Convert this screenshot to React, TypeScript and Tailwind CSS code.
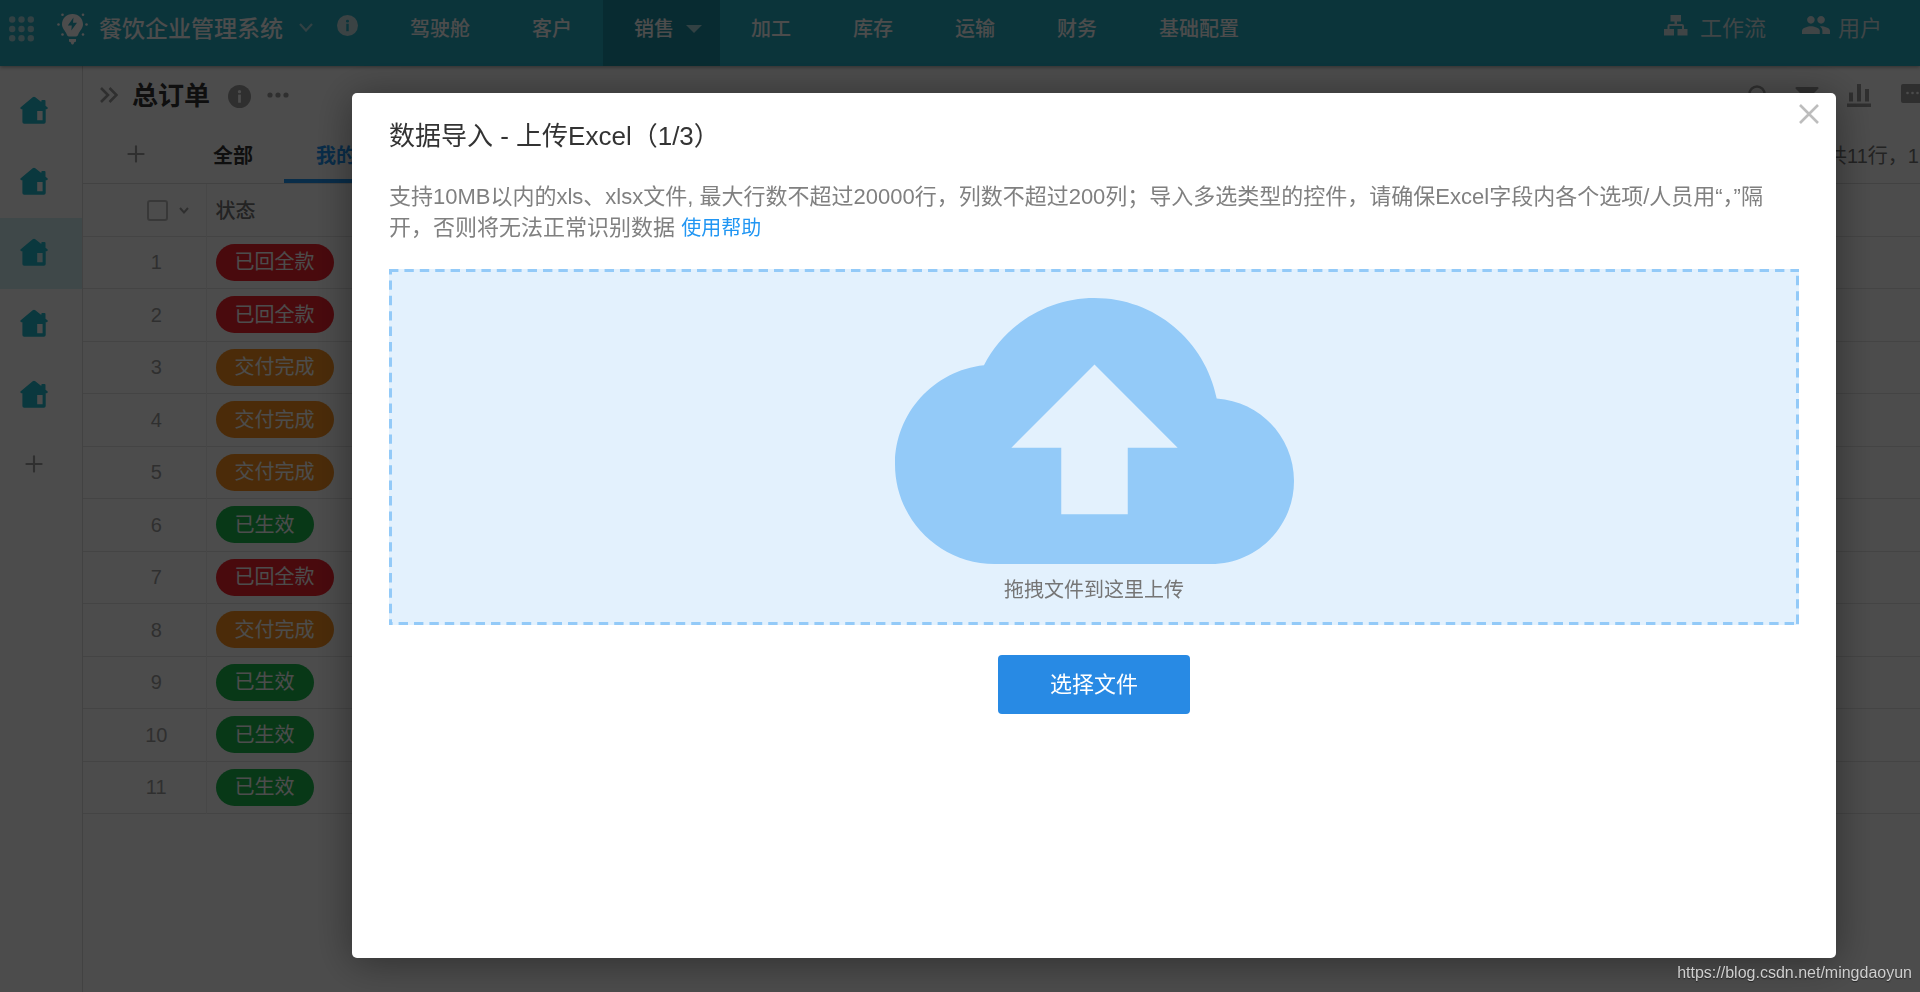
import { FiPlus } from 'react-icons/fi'

const navItems = ['驾驶舱', '客户', '销售', '加工', '库存', '运输', '财务', '基础配置']

const statusStyle = {
    已回全款: 'bg-[#f5222d]',
    交付完成: 'bg-[#fa9220]',
    已生效: 'bg-[#1bbb4f]',
}

type Status = keyof typeof statusStyle

const orders: Status[] = [
    '已回全款', '已回全款', '交付完成', '交付完成', '交付完成', '已生效',
    '已回全款', '交付完成', '已生效', '已生效', '已生效',
]

function GridIcon() {
    return (
        <svg width="26" height="26" viewBox="0 0 26 26" fill="currentColor">
            {[3.5, 13, 22.3].map((y) => [4.2, 13.5, 22.8].map((x) => (
                <circle key={`${x}-${y}`} cx={x} cy={y} r="3.2" />
            )))}
        </svg>
    )
}

function BulbIcon() {
    return (
        <svg width="32" height="32" viewBox="0 0 32 32" fill="currentColor">
            <path fillRule="evenodd" d="M16.500 1C10.300 1 6 5.600 6 11.300c0 4.200 3.200 6.500 4.600 9.700.5 1.500 1 2.500 2.400 2.500h7c1.400 0 1.900-1 2.400-2.500 1.400-3.200 4.600-5.500 4.600-9.700C27 5.600 22.700 1 16.500 1zM17.500 4.500L11.800 12.500h4L15.300 17.500 21 9.800h-4z" />
            <path d="M13 26h7v2.500l-2 1c0 1.500-.8 2-1.500 2s-1.500-.5-1.500-2l-2-1z" />
            <circle cx="6.500" cy="1.800" r="1.300" />
            <circle cx="27" cy="1.800" r="1.300" />
            <circle cx="2.500" cy="11.500" r="1.300" />
            <circle cx="30.500" cy="11.500" r="1.300" />
            <circle cx="6.500" cy="21.500" r="1.300" />
            <circle cx="27" cy="21.500" r="1.300" />
        </svg>
    )
}

function InfoIcon({ size, mark }: { size: number; mark: string }) {
    return (
        <svg width={size} height={size} viewBox="0 0 24 24">
            <circle cx="12" cy="12" r="12" fill="currentColor" />
            <g fill={mark}>
                <circle cx="12" cy="7" r="1.700" />
                <rect x="10.600" y="10" width="2.800" height="8.500" />
            </g>
        </svg>
    )
}

function ChevronIcon({ width, height, stroke }: { width: number; height: number; stroke: number }) {
    return (
        <svg width={width} height={height} viewBox={`0 0 ${width} ${height}`} fill="none" stroke="currentColor" strokeWidth={stroke}>
            <path d={`M1 1L${width / 2} ${height - 1.5}L${width - 1} 1`} />
        </svg>
    )
}

function HomeIcon() {
    return (
        <svg width="28" height="28" viewBox="0 0 28 28" fill="currentColor">
            <path fillRule="evenodd" d="M12.700 1.200a2 2 0 0 1 2.600 0L21.300 6V5a1 1 0 0 1 1-1h2.200a1 1 0 0 1 1 1v4.700l1.900 1.600c.7.600.3 1.900-.7 1.900h-1V26a1.800 1.800 0 0 1-1.800 1.800H4.200A1.800 1.800 0 0 1 2.400 26V13.200h-1c-1 0-1.400-1.300-.7-1.900zM17.200 15v9.300h5.400V15z" />
        </svg>
    )
}

function WorkflowIcon() {
    return (
        <svg width="24" height="21" viewBox="0 0 24 21" fill="currentColor">
            <path d="M6.500 0h10.500v6.500h-4V9H18a2 2 0 0 1 2 2v3h3.500v6.500h-10V14h4.500v-3H5.500v3H10v6.500H0V14h3.500v-3a2 2 0 0 1 2-2h5V6.500h-4z" />
        </svg>
    )
}

function UsersIcon() {
    return (
        <svg width="28" height="18" viewBox="1 5 22 14" preserveAspectRatio="none" fill="currentColor">
            <path d="M16 11c1.660 0 2.990-1.340 2.990-3S17.660 5 16 5c-1.660 0-3 1.340-3 3s1.340 3 3 3zm-8 0c1.660 0 2.990-1.340 2.990-3S9.660 5 8 5C6.340 5 5 6.340 5 8s1.340 3 3 3zm0 2c-2.330 0-7 1.170-7 3.500V19h14v-2.500c0-2.330-4.670-3.500-7-3.500zm8 0c-.29 0-.62.020-.97.050 1.160.84 1.970 1.970 1.970 3.450V19h6v-2.500c0-2.330-4.670-3.500-7-3.500z" />
        </svg>
    )
}

function Header() {
    return (
        <header className="relative z-10 flex h-[66px] shrink-0 items-center bg-[#25aec4] pb-2 text-white shadow-[0_1px_4px_rgba(0,0,0,0.4)]">
            <div className="flex w-[379px] shrink-0 items-center pl-2">
                <button aria-label="应用列表" className="text-[#a7d9e0]"><GridIcon /></button>
                <div className="ml-[22px] flex items-center">
                    <BulbIcon />
                    <h1 className="ml-[11px] text-[23px] leading-8 font-medium">餐饮企业管理系统</h1>
                </div>
                <button aria-label="切换应用" className="ml-4 pb-1 text-[#a7d9e0]"><ChevronIcon width={14} height={9} stroke={2.2} /></button>
                <button aria-label="应用说明" className="ml-6 pb-2 text-[#c5dfe3]"><InfoIcon size={21} mark="#25aec4" /></button>
            </div>
            <nav className="flex font-medium">
                {navItems.map((item) => (
                    <a
                        key={item}
                        href="#"
                        className={item === '销售'
                            ? '-mb-2 flex h-[66px] w-[117px] items-center bg-[#1d92a5] pb-2 pl-[31px] text-xl'
                            : '-mb-2 flex h-[66px] items-center px-[31px] pb-2 text-xl'}
                    >
                        {item}
                        {item === '销售' && (
                            <svg className="ml-3 text-[#a7d9e0]" width="16" height="8" viewBox="0 0 16 8" fill="currentColor"><path d="M0 0h16L8 8z" /></svg>
                        )}
                    </a>
                ))}
            </nav>
            <div className="ml-auto flex items-center gap-9 pr-[38px] text-[22px] leading-8 text-[#d5e6e9]">
                <a href="#" className="flex items-center gap-3"><span className="pb-2"><WorkflowIcon /></span>工作流</a>
                <a href="#" className="flex items-center gap-2"><span className="pb-2"><UsersIcon /></span>用户</a>
            </div>
        </header>
    )
}

function Sidebar() {
    return (
        <aside className="flex w-[83px] shrink-0 flex-col border-r border-[#dcdcdc] pt-[10px] text-[#22bccf]">
            {[1, 2, 3, 4, 5].map((n) => (
                <a
                    key={n}
                    href="#"
                    aria-label={`分组${n}`}
                    className={n === 3 ? 'flex h-[71px] items-center bg-[#d3f1f5] pb-1 pl-5' : 'flex h-[71px] items-center pb-1 pl-5'}
                >
                    <HomeIcon />
                </a>
            ))}
            <button aria-label="添加分组" className="flex h-[66px] items-center pl-[21px] text-[#9e9e9e]">
                <FiPlus size={26} />
            </button>
        </aside>
    )
}

function Toolbar() {
    return (
        <div className="flex h-[58px] items-center">
            <button aria-label="展开" className="ml-[17px] text-[#9e9e9e]">
                <svg width="18" height="16" viewBox="0 0 18 16" fill="none" stroke="currentColor" strokeWidth="2.600">
                    <path d="M1 1l7 7-7 7M9.500 1l7 7-7 7" />
                </svg>
            </button>
            <h2 className="ml-[14px] pt-[2px] text-[26px] leading-9 font-bold text-[#333]">总订单</h2>
            <button aria-label="说明" className="ml-[18px] pt-[2px] text-[#9e9e9e]"><InfoIcon size={23} mark="#fff" /></button>
            <button aria-label="更多" className="ml-4 text-[#9e9e9e]">
                <svg width="22" height="6" viewBox="0 0 22 6" fill="currentColor">
                    <circle cx="3" cy="3" r="2.600" /><circle cx="11" cy="3" r="2.600" /><circle cx="19" cy="3" r="2.600" />
                </svg>
            </button>
            <div className="ml-auto flex shrink-0 items-center text-[#9e9e9e]">
                <button aria-label="搜索" className="mr-6">
                    <svg width="24" height="22" viewBox="0 0 24 22" fill="none" stroke="currentColor" strokeWidth="2.500">
                        <circle cx="10" cy="10" r="7.500" /><path d="M15.500 15.500l6 6" />
                    </svg>
                </button>
                <button aria-label="筛选" className="mr-7">
                    <svg width="24" height="16" viewBox="0 0 24 16" fill="currentColor"><path d="M1.500 0h21q1.500 0 1 1.500L15 10v6H9v-6L.5 1.500Q0 0 1.500 0z" /></svg>
                </button>
                <button aria-label="统计" className="mr-[30px]">
                    <svg width="24" height="24" viewBox="0 0 24 24" fill="currentColor">
                        <path d="M2 9.500h4v9H2zM10 1h4v17.500h-4zM18 6h4v12.500h-4zM0 20.500h24v3.500H0z" />
                    </svg>
                </button>
                <button aria-label="讨论" className="pb-1">
                    <svg width="19" height="19" viewBox="0 0 19 19">
                        <path d="M2 0h17v19H2q-2 0-2-2V2q0-2 2-2z" fill="currentColor" />
                        <g fill="#fff"><circle cx="6.500" cy="9" r="1.300" /><circle cx="11.500" cy="9" r="1.300" /><circle cx="16.500" cy="9" r="1.300" /></g>
                    </svg>
                </button>
            </div>
        </div>
    )
}

function ViewTabs() {
    return (
        <div className="flex h-[60px] items-stretch border-b border-[#dcdcdc] text-xl">
            <button aria-label="添加视图" className="ml-10 text-[#9e9e9e]"><FiPlus size={26} /></button>
            <button className="ml-16 pt-1 font-bold text-[#333]">全部</button>
            <button className="ml-[31px] border-b-4 border-[#2196f3] px-8 pt-2 font-bold text-[#2196f3]">我的订单</button>
            <span className="ml-auto w-[93px] self-center overflow-hidden pt-1 whitespace-nowrap text-[#757575]">共11行，1页</span>
        </div>
    )
}

function OrderTable() {
    return (
        <table className="w-full table-fixed border-collapse text-xl">
            <thead>
                <tr className="h-[52px] border-b border-[#e4e4e4]">
                    <th className="w-[123px] border-r border-[#eee] pt-[2px]">
                        <div className="flex items-center pl-16">
                            <input type="checkbox" aria-label="全选" className="size-[21px] appearance-none rounded-[3px] border-2 border-[#bdbdbd]" />
                            <button aria-label="选择范围" className="ml-[11px] text-[#9e9e9e]"><ChevronIcon width={10} height={7} stroke={2} /></button>
                        </div>
                    </th>
                    <th className="pt-[2px] pl-[9px] text-left font-medium text-[#757575]">状态</th>
                </tr>
            </thead>
            <tbody>
                {orders.map((status, index) => (
                    <tr key={index} className="border-b border-[#e4e4e4] odd:h-[52px] even:h-[53px]">
                        <td className="border-r border-[#eee] pl-6 text-center text-[#9e9e9e]">{index + 1}</td>
                        <td className="pl-[9px]">
                            <span className={`flex h-[37px] w-fit items-center rounded-full px-[19px] text-white ${statusStyle[status]}`}>
                                {status}
                            </span>
                        </td>
                    </tr>
                ))}
            </tbody>
        </table>
    )
}

function ImportDialog() {
    return (
        <div className="fixed inset-0 z-20 flex bg-black/70 pt-[93px] pr-[84px] pb-[34px] pl-[352px]">
            <section
                role="dialog"
                aria-labelledby="import-title"
                className="relative flex-1 rounded-[5px] bg-white px-[37px] pt-[25px] shadow-[0_4px_40px_rgba(0,0,0,0.4)]"
            >
                <button aria-label="关闭" className="absolute top-[11px] right-[17px] text-[#bdbdbd]">
                    <svg width="20" height="20" viewBox="0 0 20 20" stroke="currentColor" strokeWidth="2.600">
                        <path d="M1 1l18 18M19 1L1 19" />
                    </svg>
                </button>
                <h2 id="import-title" className="text-[26px] leading-9 text-[#333]">数据导入 - 上传Excel（1/3）</h2>
                <p className="mt-[27px] text-[22px] leading-[31px] text-[#808080]">
                    支持10MB以内的xls、xlsx文件, 最大行数不超过20000行，列数不超过200列；导入多选类型的控件，请确保Excel字段内各个选项/人员用“，”隔开，否则将无法正常识别数据{' '}
                    <a href="#" className="text-xl text-[#2196f3]">使用帮助</a>
                </p>
                <div className="relative mt-[26px] flex flex-col items-center bg-[#e3f1fd] pt-[29px] pb-[19px]">
                    {/* half of the stroke falls outside the svg, so 3px of dash stay visible */}
                    <svg className="pointer-events-none absolute inset-0 size-full" fill="none" stroke="#93caf8">
                        <rect width="100%" height="100%" strokeWidth="6" strokeDasharray="9.400 6" />
                    </svg>
                    <svg width="399" height="266" viewBox="0 4 24 16" fill="#93caf8">
                        <path d="M19.350 10.040C18.670 6.590 15.640 4 12 4 9.110 4 6.600 5.640 5.350 8.040 2.340 8.360 0 10.910 0 14c0 3.310 2.690 6 6 6h13c2.760 0 5-2.240 5-5 0-2.640-2.050-4.780-4.650-4.960zM14 13v4h-4v-4H7l5-5 5 5h-3z" />
                    </svg>
                    <p className="mt-[10px] text-xl leading-8 text-[#757575]">拖拽文件到这里上传</p>
                </div>
                <button className="mx-auto mt-[30px] block h-[59px] w-[192px] rounded-[4px] bg-[#288ae4] text-[22px] text-white">选择文件</button>
            </section>
        </div>
    )
}

export default function App() {
    return (
        <div className="flex min-h-screen flex-col overflow-hidden bg-white font-['Liberation_Sans','Noto_Sans_CJK_SC',sans-serif]">
            <Header />
            <div className="flex flex-1">
                <Sidebar />
                <main className="min-w-0 flex-1">
                    <Toolbar />
                    <ViewTabs />
                    <OrderTable />
                </main>
            </div>
            <ImportDialog />
            <a href="https://blog.csdn.net/mingdaoyun" className="fixed right-2 bottom-[7px] z-30 text-base leading-6 text-[#cfcfcf] [text-shadow:0_1px_1px_rgba(0,0,0,0.5)]">
                https://blog.csdn.net/mingdaoyun
            </a>
        </div>
    )
}
